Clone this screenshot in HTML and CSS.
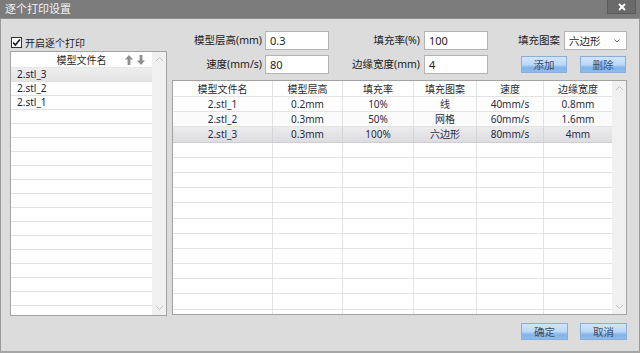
FILE: index.html
```html
<!DOCTYPE html>
<html lang="zh">
<head>
<meta charset="utf-8">
<title>逐个打印设置</title>
<link rel="stylesheet" href="styles.css">
</head>
<body>
<div class="window">
  <div class="titlebar">
    <span class="title">逐个打印设置</span>
    <span class="close"><svg width="8" height="8" viewBox="0 0 8 8"><path d="M1 1 L7 7 M7 1 L1 7" stroke="#ffffff" stroke-width="1.8"/></svg></span>
  </div>
  <div class="body">
    <div class="main">
      <div class="left">
        <label class="check">
          <span class="box"><svg width="9" height="9" viewBox="0 0 9 9"><path d="M1.2 4.6 L3.4 7 L7.9 1.6" fill="none" stroke="#1c1c1c" stroke-width="1.6"/></svg></span>
          <span>开启逐个打印</span>
        </label>
        <div class="list">
          <div class="list-body">
            <div class="list-head">
              <span></span>
              <span class="list-title">模型文件名</span>
              <span class="arrows">
                <svg width="8" height="10" viewBox="0 0 8 10"><path d="M4 0 L8 4.6 H5.4 V10 H2.6 V4.6 H0 Z" fill="#8e8e8e"/></svg>
                <svg width="8" height="10" viewBox="0 0 8 10"><path d="M4 10 L8 5.4 H5.4 V0 H2.6 V5.4 H0 Z" fill="#8e8e8e"/></svg>
              </span>
            </div>
            <div class="lrow sel">2.stl_3</div>
            <div class="lrow">2.stl_2</div>
            <div class="lrow">2.stl_1</div>
            <div class="lrow"></div><div class="lrow"></div><div class="lrow"></div>
            <div class="lrow"></div><div class="lrow"></div><div class="lrow"></div>
            <div class="lrow"></div><div class="lrow"></div><div class="lrow"></div>
            <div class="lrow"></div><div class="lrow"></div><div class="lrow"></div>
            <div class="lrow"></div><div class="lrow"></div><div class="lrow"></div>
          </div>
          <div class="scroll">
            <svg width="9" height="6" viewBox="0 0 9 6"><path d="M1 5 L4.5 1.5 L8 5" fill="none" stroke="#c2c2c2" stroke-width="1"/></svg>
            <svg width="9" height="6" viewBox="0 0 9 6"><path d="M1 1 L4.5 4.5 L8 1" fill="none" stroke="#c2c2c2" stroke-width="1"/></svg>
          </div>
        </div>
      </div>
      <div class="right">
        <div class="form">
          <span class="lbl">模型层高(mm)</span>
          <span class="field">0.3</span>
          <span class="lbl">填充率(%)</span>
          <span class="field">100</span>
          <span class="lbl">填充图案</span>
          <span class="field select">六边形<svg width="6" height="4" viewBox="0 0 6 4"><path d="M0.5 0.5 L3 3 L5.5 0.5" fill="none" stroke="#666" stroke-width="1"/></svg></span>
          <span class="lbl">速度(mm/s)</span>
          <span class="field">80</span>
          <span class="lbl">边缘宽度(mm)</span>
          <span class="field">4</span>
          <div class="btns">
            <button class="btn">添加</button>
            <button class="btn">删除</button>
          </div>
        </div>
        <div class="table">
          <div class="tbody">
            <div class="trow head"><span>模型文件名</span><span>模型层高</span><span>填充率</span><span>填充图案</span><span>速度</span><span>边缘宽度</span></div>
            <div class="trow"><span>2.stl_1</span><span>0.2mm</span><span>10%</span><span>线</span><span>40mm/s</span><span>0.8mm</span></div>
            <div class="trow alt"><span>2.stl_2</span><span>0.3mm</span><span>50%</span><span>网格</span><span>60mm/s</span><span>1.6mm</span></div>
            <div class="trow sel"><span>2.stl_3</span><span>0.3mm</span><span>100%</span><span>六边形</span><span>80mm/s</span><span>4mm</span></div>
            <div class="trow"><span></span><span></span><span></span><span></span><span></span><span></span></div>
            <div class="trow"><span></span><span></span><span></span><span></span><span></span><span></span></div>
            <div class="trow"><span></span><span></span><span></span><span></span><span></span><span></span></div>
            <div class="trow"><span></span><span></span><span></span><span></span><span></span><span></span></div>
            <div class="trow"><span></span><span></span><span></span><span></span><span></span><span></span></div>
            <div class="trow"><span></span><span></span><span></span><span></span><span></span><span></span></div>
            <div class="trow"><span></span><span></span><span></span><span></span><span></span><span></span></div>
            <div class="trow"><span></span><span></span><span></span><span></span><span></span><span></span></div>
            <div class="trow"><span></span><span></span><span></span><span></span><span></span><span></span></div>
            <div class="trow"><span></span><span></span><span></span><span></span><span></span><span></span></div>
            <div class="trow"><span></span><span></span><span></span><span></span><span></span><span></span></div>
            <div class="trow"><span></span><span></span><span></span><span></span><span></span><span></span></div>
          </div>
          <div class="scroll">
            <svg width="9" height="6" viewBox="0 0 9 6"><path d="M1 5 L4.5 1.5 L8 5" fill="none" stroke="#c2c2c2" stroke-width="1"/></svg>
            <svg width="9" height="6" viewBox="0 0 9 6"><path d="M1 1 L4.5 4.5 L8 1" fill="none" stroke="#c2c2c2" stroke-width="1"/></svg>
          </div>
        </div>
      </div>
    </div>
    <div class="footer">
      <button class="btn wide">确定</button>
      <button class="btn wide">取消</button>
    </div>
  </div>
</div>
</body>
</html>
```

FILE: styles.css
```css
* { box-sizing: border-box; }
html, body { margin: 0; padding: 0; }
body {
  width: 640px;
  height: 353px;
  overflow: hidden;
  font-family: "Noto Sans", "Noto Sans CJK SC", sans-serif;
  color: #26262e;
  background: #dcdcdc;
}
.window {
  width: 640px;
  height: 353px;
  display: flex;
  flex-direction: column;
}
.titlebar {
  height: 19px;
  flex: none;
  background: #7b7b7b;
  border-bottom: 1px solid #8f8f8f;
  display: flex;
  align-items: flex-start;
  padding-left: 5px;
  padding-right: 4px;
}
.title {
  color: #f2f2f2;
  font-size: 11px;
  line-height: 17px;
  font-family: "Noto Sans CJK SC", sans-serif;
}
.close {
  margin-left: auto;
  width: 29px;
  height: 14px;
  background: #6a6a6a;
  border: 1px solid #5b5b5b;
  border-top: none;
  display: flex;
  align-items: center;
  justify-content: center;
}
.body {
  flex: 1;
  background: #dcdcdc;
  border-left: 1px solid #9a9a9a;
  border-right: 1px solid #9a9a9a;
  border-bottom: 2px solid #a6a6a6;
  padding: 0 12px 0 9px;
  display: flex;
  flex-direction: column;
}
.main {
  height: 297px;
  display: flex;
  gap: 5px;
}
.left {
  width: 157px;
  padding-top: 16px;
  display: flex;
  flex-direction: column;
}
.check {
  height: 14px;
  display: flex;
  align-items: center;
  gap: 3px;
  padding-left: 1px;
  font-size: 10px;
  font-family: "Noto Sans CJK SC", sans-serif;
  color: #1e1e1e;
}
.box {
  width: 11px;
  height: 11px;
  border: 1px solid #333;
  background: #fff;
  display: flex;
  align-items: center;
  justify-content: center;
}
.list {
  margin-top: 2px;
  height: 265px;
  border: 1px solid #a3a3a3;
  background: #fff;
  display: flex;
  overflow: hidden;
}
.list-body {
  width: 141px;
  overflow: hidden;
}
.list-head {
  height: 16px;
  display: grid;
  grid-template-columns: 1fr auto 1fr;
  align-items: center;
  font-size: 10px;
  font-family: "Noto Sans CJK SC", sans-serif;
  color: #2a2a2a;
  border-bottom: 1px solid #e6e6e6;
}
.list-title { line-height: 15px; }
.arrows {
  justify-self: end;
  display: flex;
  gap: 4px;
  padding-right: 7px;
}
.lrow {
  height: 14px;
  border-bottom: 1px solid #e0e0e0;
  font-size: 10px;
  line-height: 13px;
  padding-left: 6px;
  color: #22223a;
}
.lrow.sel {
  background: linear-gradient(#eeeeee, #e3e3e3);
}
.scroll {
  width: 14px;
  background: #f0f0f0;
  display: flex;
  flex-direction: column;
  justify-content: space-between;
  align-items: center;
  padding: 4px 0 4px;
}
.right {
  width: 455px;
  padding-top: 12px;
  display: flex;
  flex-direction: column;
}
.form {
  display: grid;
  grid-template-columns: 93px 64px 95px 64px 76px 63px;
  grid-template-rows: 19px 19px;
  row-gap: 5px;
  font-size: 10.5px;
}
.lbl {
  text-align: right;
  padding-right: 3px;
  line-height: 19px;
  white-space: nowrap;
  color: #222;
}
.lbl:nth-child(3), .lbl:nth-child(5), .lbl:nth-child(9) { padding-right: 4px; }
.field {
  background: #fff;
  border: 1px solid #b4b4b4;
  line-height: 17px;
  padding-left: 4px;
  font-size: 11px;
  color: #1e1e1e;
}
.select {
  display: flex;
  align-items: center;
  justify-content: space-between;
  padding-right: 6px;
  font-size: 10.5px;
  font-family: "Noto Sans CJK SC", sans-serif;
}
.btns {
  grid-column: 5 / 7;
  display: flex;
  justify-content: flex-end;
  align-items: center;
  gap: 13px;
  padding-right: 1px;
}
.btn {
  width: 46px;
  height: 17px;
  padding: 0;
  border: 1px solid #8aaed8;
  background: linear-gradient(#d2e5fa 0%, #bcd8f6 50%, #80b2e9 72%, #8fbdec 100%);
  color: #3b4c6a;
  font-family: "Noto Sans CJK SC", sans-serif;
  font-size: 10.5px;
  line-height: 15px;
}
.btn.wide { width: 47px; }
.table {
  margin-top: 6px;
  height: 235px;
  border: 1px solid #a3a3a3;
  background: #fff;
  display: flex;
  overflow: hidden;
}
.tbody {
  width: 439px;
  overflow: hidden;
}
.trow {
  display: grid;
  grid-template-columns: 100px 70px 71px 63px 67px 68px;
  height: 15.2px;
  font-size: 10px;
  color: #2a2a44;
}
.trow span {
  border-right: 1px solid #e3e3e3;
  border-bottom: 1px solid #e3e3e3;
  text-align: center;
  line-height: 14px;
  white-space: nowrap;
  overflow: hidden;
}
.trow span:last-child { border-right: none; }
.trow.head { height: 16px; font-family: "Noto Sans CJK SC", sans-serif; color: #2a2a2a; }
.trow.head span { line-height: 15px; }
.trow.alt { background: #fbfbfb; }
.trow.sel { background: linear-gradient(#ececef, #dcdce0); }
.trow.sel span { border-right-color: #d4d4d8; border-bottom-color: #cfcfd3; }
.footer {
  margin-top: 7px;
  display: flex;
  justify-content: flex-end;
  gap: 12px;
}
```
